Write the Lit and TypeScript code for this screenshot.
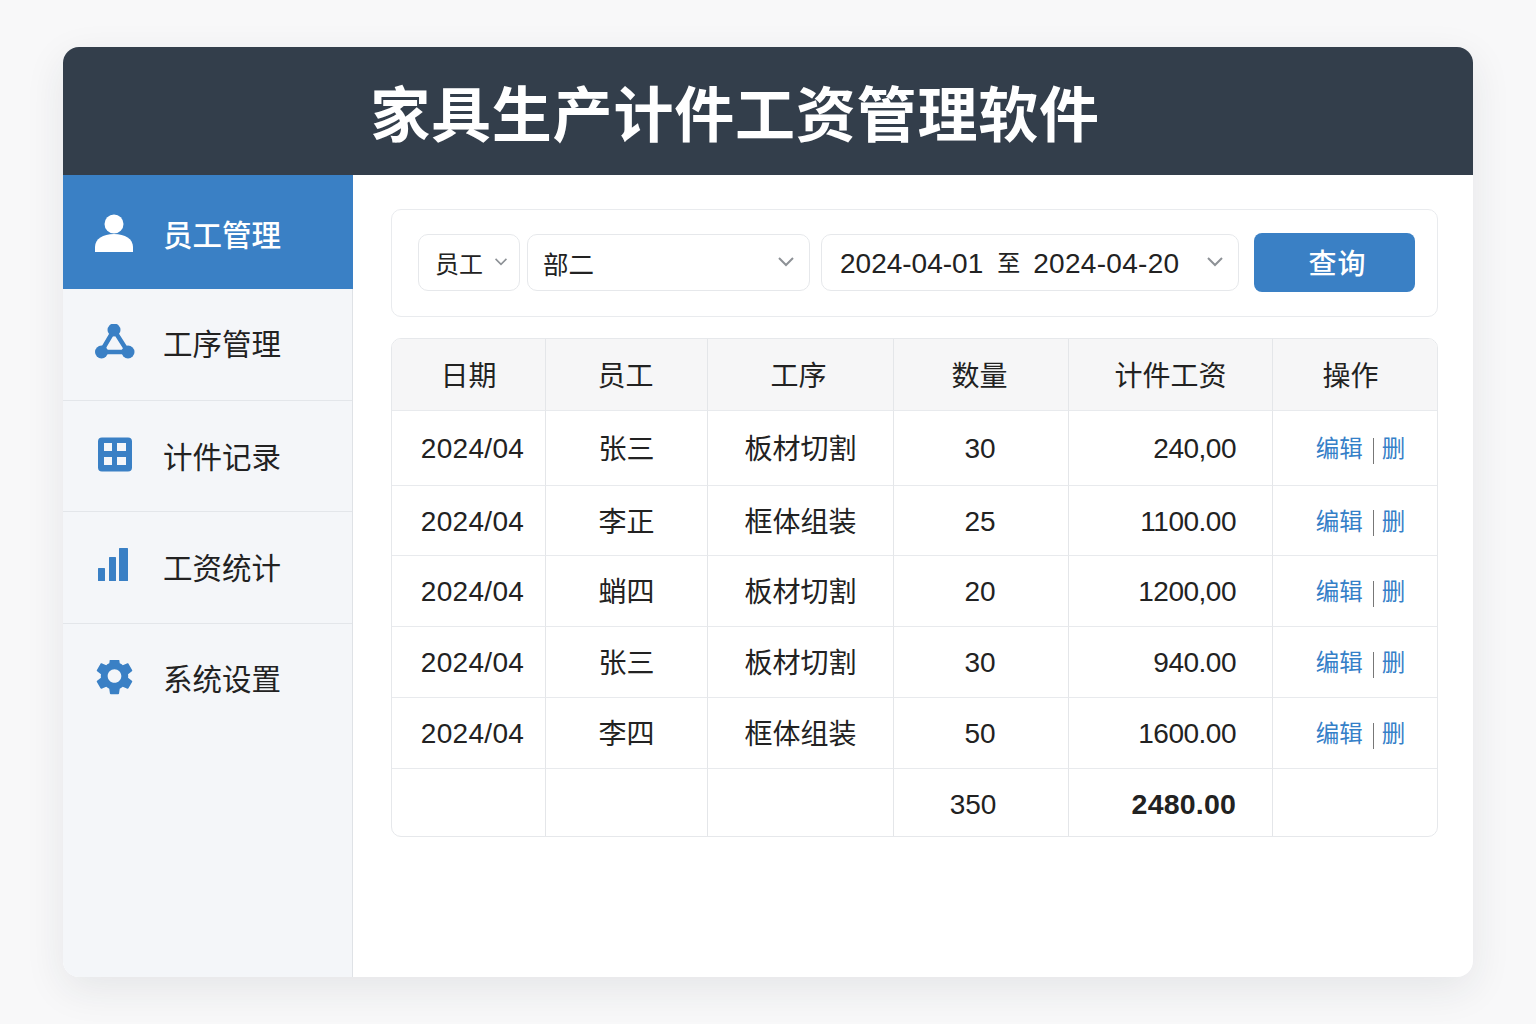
import { LitElement, html, css, svg } from "lit";
import { customElement } from "lit/decorators.js";

const navItems = [
  {
    label: "员工管理",
    active: true,
    icon: svg`<circle cx="19" cy="12" r="9.5"/><path d="M0 40v-5c0-8 8-13 19-13s19 5 19 13v5z"/>`,
  },
  {
    label: "工序管理",
    icon: svg`<path d="M19 6 6 28h27z" fill="none" stroke="currentColor" stroke-width="4.5"/><circle cx="19" cy="6" r="6.5"/><circle cx="6.500" cy="28" r="6.500"/><circle cx="33" cy="28" r="6.500"/>`,
  },
  {
    label: "计件记录",
    icon: svg`<path fill-rule="evenodd" d="M7 1.500h26a4 4 0 0 1 4 4v26a4 4 0 0 1-4 4H7a4 4 0 0 1-4-4v-26a4 4 0 0 1 4-4zm2 5.500v8h8V7zm13 0v8h9V7zM9 21v8h8v-8zm13 0v8h9v-8z"/>`,
  },
  {
    label: "工资统计",
    icon: svg`<rect x="3" y="20" width="7" height="13" rx="0.5"/><rect x="14" y="9" width="7" height="24" rx="0.5"/><rect x="24" y="0" width="9" height="33" rx="0.5"/>`,
  },
  {
    label: "系统设置",
    icon: svg`<path transform="translate(-3.3 -6.800) scale(1.900)" d="M19.14 12.94c.04-.3.06-.61.06-.94 0-.32-.02-.64-.07-.94l2.03-1.58c.18-.14.23-.41.12-.61l-1.92-3.32c-.12-.22-.37-.29-.59-.22l-2.39.96c-.5-.38-1.03-.7-1.62-.94l-.36-2.54c-.04-.24-.24-.41-.48-.41h-3.84c-.24 0-.43.17-.47.41l-.36 2.54c-.59.24-1.13.57-1.62.94l-2.39-.96c-.22-.08-.47 0-.59.22L2.74 8.87c-.12.21-.08.47.12.61l2.03 1.58c-.05.3-.09.63-.09.94s.02.64.07.94l-2.03 1.58c-.18.14-.23.41-.12.61l1.92 3.32c.12.22.37.29.59.22l2.39-.96c.5.38 1.03.7 1.62.94l.36 2.54c.05.24.24.41.48.41h3.84c.24 0 .44-.17.47-.41l.36-2.54c.59-.24 1.13-.56 1.62-.94l2.39.96c.22.08.47 0 .59-.22l1.92-3.32c.12-.22.07-.47-.12-.61l-2.01-1.58zM12 15.6c-1.98 0-3.6-1.62-3.6-3.6s1.62-3.6 3.6-3.6 3.6 1.62 3.6 3.6-1.62 3.6-3.6 3.6z"/>`,
  },
];

const rows = [
  ["2024/04", "张三", "板材切割", "30", "240,00"],
  ["2024/04", "李正", "框体组装", "25", "1100.00"],
  ["2024/04", "蛸四", "板材切割", "20", "1200,00"],
  ["2024/04", "张三", "板材切割", "30", "940.00"],
  ["2024/04", "李四", "框体组装", "50", "1600.00"],
];

const chevron = html`<svg class="chevron" viewBox="0 0 18 12" width="18" height="12">
  <path d="M2 2l7 7 7-7" fill="none" stroke="currentColor" stroke-width="2" />
</svg>`;

@customElement("app-root")
export class AppRoot extends LitElement {
  static styles = css`
    :host {
      display: block;
      height: 1024px;
      padding: 47px 63px;
      box-sizing: border-box;
      background: #f8f8f9;
      color: #222;
      font-family: "Liberation Sans", "Noto Sans CJK SC", sans-serif;
    }

    .card {
      height: 930px;
      border-radius: 16px;
      overflow: hidden;
      display: flex;
      flex-direction: column;
      background: #fff;
      box-shadow: 0 12px 40px rgba(30, 40, 60, 0.09);
    }

    .title {
      height: 128px;
      flex: none;
      background: #333e4b;
      color: #fff;
      display: flex;
      align-items: center;
      justify-content: center;
      padding: 0 66px 1px 0;
      box-sizing: border-box;
      font-size: 60px;
      font-weight: 700;
      letter-spacing: 0.8px;
    }

    .body {
      flex: 1;
      display: flex;
      min-height: 0;
    }

    .sidebar {
      width: 290px;
      flex: none;
      box-sizing: border-box;
      background: #f4f6f9;
      border-right: 1px solid #dfe2e6;
    }

    .nav-item {
      height: 111.67px;
      box-sizing: border-box;
      display: flex;
      align-items: center;
      gap: 28px;
      padding-left: 32px;
      font-size: 29.500px;
      color: #222;
      border-bottom: 1px solid #e3e6ea;
    }

    .nav-item:last-child {
      border-bottom: none;
    }

    .nav-item.active {
      height: 114px;
      margin-right: -1px;
      background: #3a80c5;
      color: #fff;
      font-weight: 500;
      border-bottom: none;
    }

    .nav-item span {
      margin-bottom: 4px;
    }

    .nav-item:nth-child(3) span {
      margin-bottom: 1px;
    }

    .nav-item:last-child span {
      margin-bottom: 6px;
    }

    .nav-item.active span {
      margin: 1px 0 0;
    }

    .nav-icon {
      width: 40px;
      height: 40px;
      flex: none;
      color: #3a80c5;
      fill: currentColor;
    }

    .active .nav-icon {
      color: #fff;
    }

    .content {
      flex: 1;
      min-width: 0;
      padding: 34px 35px 0 38px;
      display: flex;
      flex-direction: column;
      gap: 21px;
    }

    .filters {
      height: 108px;
      box-sizing: border-box;
      border: 1px solid #e9ebee;
      border-radius: 10px;
      display: flex;
      align-items: center;
      padding: 0 22px 2px 26px;
    }

    .select {
      height: 57px;
      box-sizing: border-box;
      border: 1px solid #e6e8eb;
      border-radius: 10px;
      display: flex;
      align-items: center;
      justify-content: space-between;
      background: #fff;
      font-size: 25.500px;
      color: #222;
    }

    .select.kind {
      width: 102px;
      padding: 0 11px 0 16px;
      margin-right: 7px;
      font-size: 24px;
    }

    .select.kind .chevron {
      width: 14px;
    }

    .select.dept {
      width: 283px;
      padding: 0 14px 0 15px;
      margin-right: 11px;
    }

    .select.range {
      width: 418px;
      padding: 0 14px 0 18px;
      margin-right: 15px;
      font-size: 28px;
    }

    .range-text {
      display: flex;
      align-items: center;
      white-space: nowrap;
      padding-top: 4px;
    }

    .range-to {
      font-size: 23px;
      margin: -6px 13px 0 14px;
    }

    .range-end {
      letter-spacing: 0.3px;
    }

    .chevron {
      color: #8d9196;
      flex: none;
    }

    .query {
      width: 161px;
      height: 59px;
      border: none;
      border-radius: 8px;
      padding: 0 0 0 6px;
      background: #3a80c5;
      color: #fff;
      font-family: inherit;
      font-size: 28px;
      font-weight: 500;
      letter-spacing: 1px;
    }

    .table-wrap {
      border: 1px solid #e6e8eb;
      border-radius: 10px;
      overflow: hidden;
    }

    table {
      width: 100%;
      table-layout: fixed;
      border-collapse: separate;
      border-spacing: 0;
      font-size: 28px;
    }

    th,
    td {
      padding: 0 0 2px;
      text-align: center;
      font-weight: 400;
      border-right: 1px solid #e4e6e9;
      border-bottom: 1px solid #e8eaed;
      height: 71px;
      box-sizing: border-box;
    }

    th:last-child,
    td:last-child {
      border-right: none;
    }

    th {
      height: 72px;
      background: #f6f6f7;
    }

    th:nth-child(2) {
      padding-right: 2px;
    }

    th:nth-child(3) {
      padding-right: 4px;
    }

    th:nth-child(4) {
      padding-right: 3px;
    }

    th:nth-child(6) {
      padding-right: 9px;
    }

    tbody tr:first-child td {
      height: 75px;
    }

    tbody tr:nth-child(2) td {
      height: 70px;
    }

    tbody tr:last-child td {
      height: 67px;
      border-bottom: none;
    }

    td.num {
      padding: 2px 2px 0 0;
    }

    td.date {
      padding: 2px 0 0 8px;
      letter-spacing: 0.3px;
    }

    td.amount {
      text-align: right;
      padding: 2px 36px 0 0;
      letter-spacing: -0.5px;
    }

    tbody tr:last-child td.num {
      padding: 4px 16px 0 0;
    }

    tbody tr:last-child td.amount {
      padding-top: 4px;
      font-size: 28.500px;
      font-weight: 700;
      letter-spacing: 0.2px;
    }

    td.actions {
      padding-left: 11px;
      font-size: 23.500px;
      color: #3580c8;
    }

    .sep {
      display: inline-block;
      width: 1px;
      height: 26px;
      background: #777;
      margin: 0 8px 0 10px;
      vertical-align: middle;
    }
  `;

  render() {
    return html`
      <div class="card">
        <header class="title">家具生产计件工资管理软件</header>
        <div class="body">
          <nav class="sidebar">
            ${navItems.map(
              (item) => html`
                <div class="nav-item ${item.active ? "active" : ""}">
                  <svg class="nav-icon" viewBox="0 0 40 40">${item.icon}</svg>
                  <span>${item.label}</span>
                </div>
              `
            )}
          </nav>
          <main class="content">
            <section class="filters">
              <div class="select kind"><span>员工</span>${chevron}</div>
              <div class="select dept"><span>部二</span>${chevron}</div>
              <div class="select range">
                <div class="range-text">
                  <span>2024-04-01</span><span class="range-to">至</span><span class="range-end">2024-04-20</span>
                </div>
                ${chevron}
              </div>
              <button class="query">查询</button>
            </section>
            <div class="table-wrap">
              <table>
                <colgroup>
                  <col style="width:154px" />
                  <col style="width:162px" />
                  <col style="width:186px" />
                  <col style="width:175px" />
                  <col style="width:204px" />
                  <col />
                </colgroup>
                <thead>
                  <tr>
                    <th>日期</th>
                    <th>员工</th>
                    <th>工序</th>
                    <th>数量</th>
                    <th>计件工资</th>
                    <th>操作</th>
                  </tr>
                </thead>
                <tbody>
                  ${rows.map(
                    (r) => html`
                      <tr>
                        <td class="date">${r[0]}</td>
                        <td>${r[1]}</td>
                        <td>${r[2]}</td>
                        <td class="num">${r[3]}</td>
                        <td class="amount">${r[4]}</td>
                        <td class="actions">编辑<span class="sep"></span>删</td>
                      </tr>
                    `
                  )}
                  <tr>
                    <td></td>
                    <td></td>
                    <td></td>
                    <td class="num">350</td>
                    <td class="amount">2480.00</td>
                    <td></td>
                  </tr>
                </tbody>
              </table>
            </div>
          </main>
        </div>
      </div>
    `;
  }
}
